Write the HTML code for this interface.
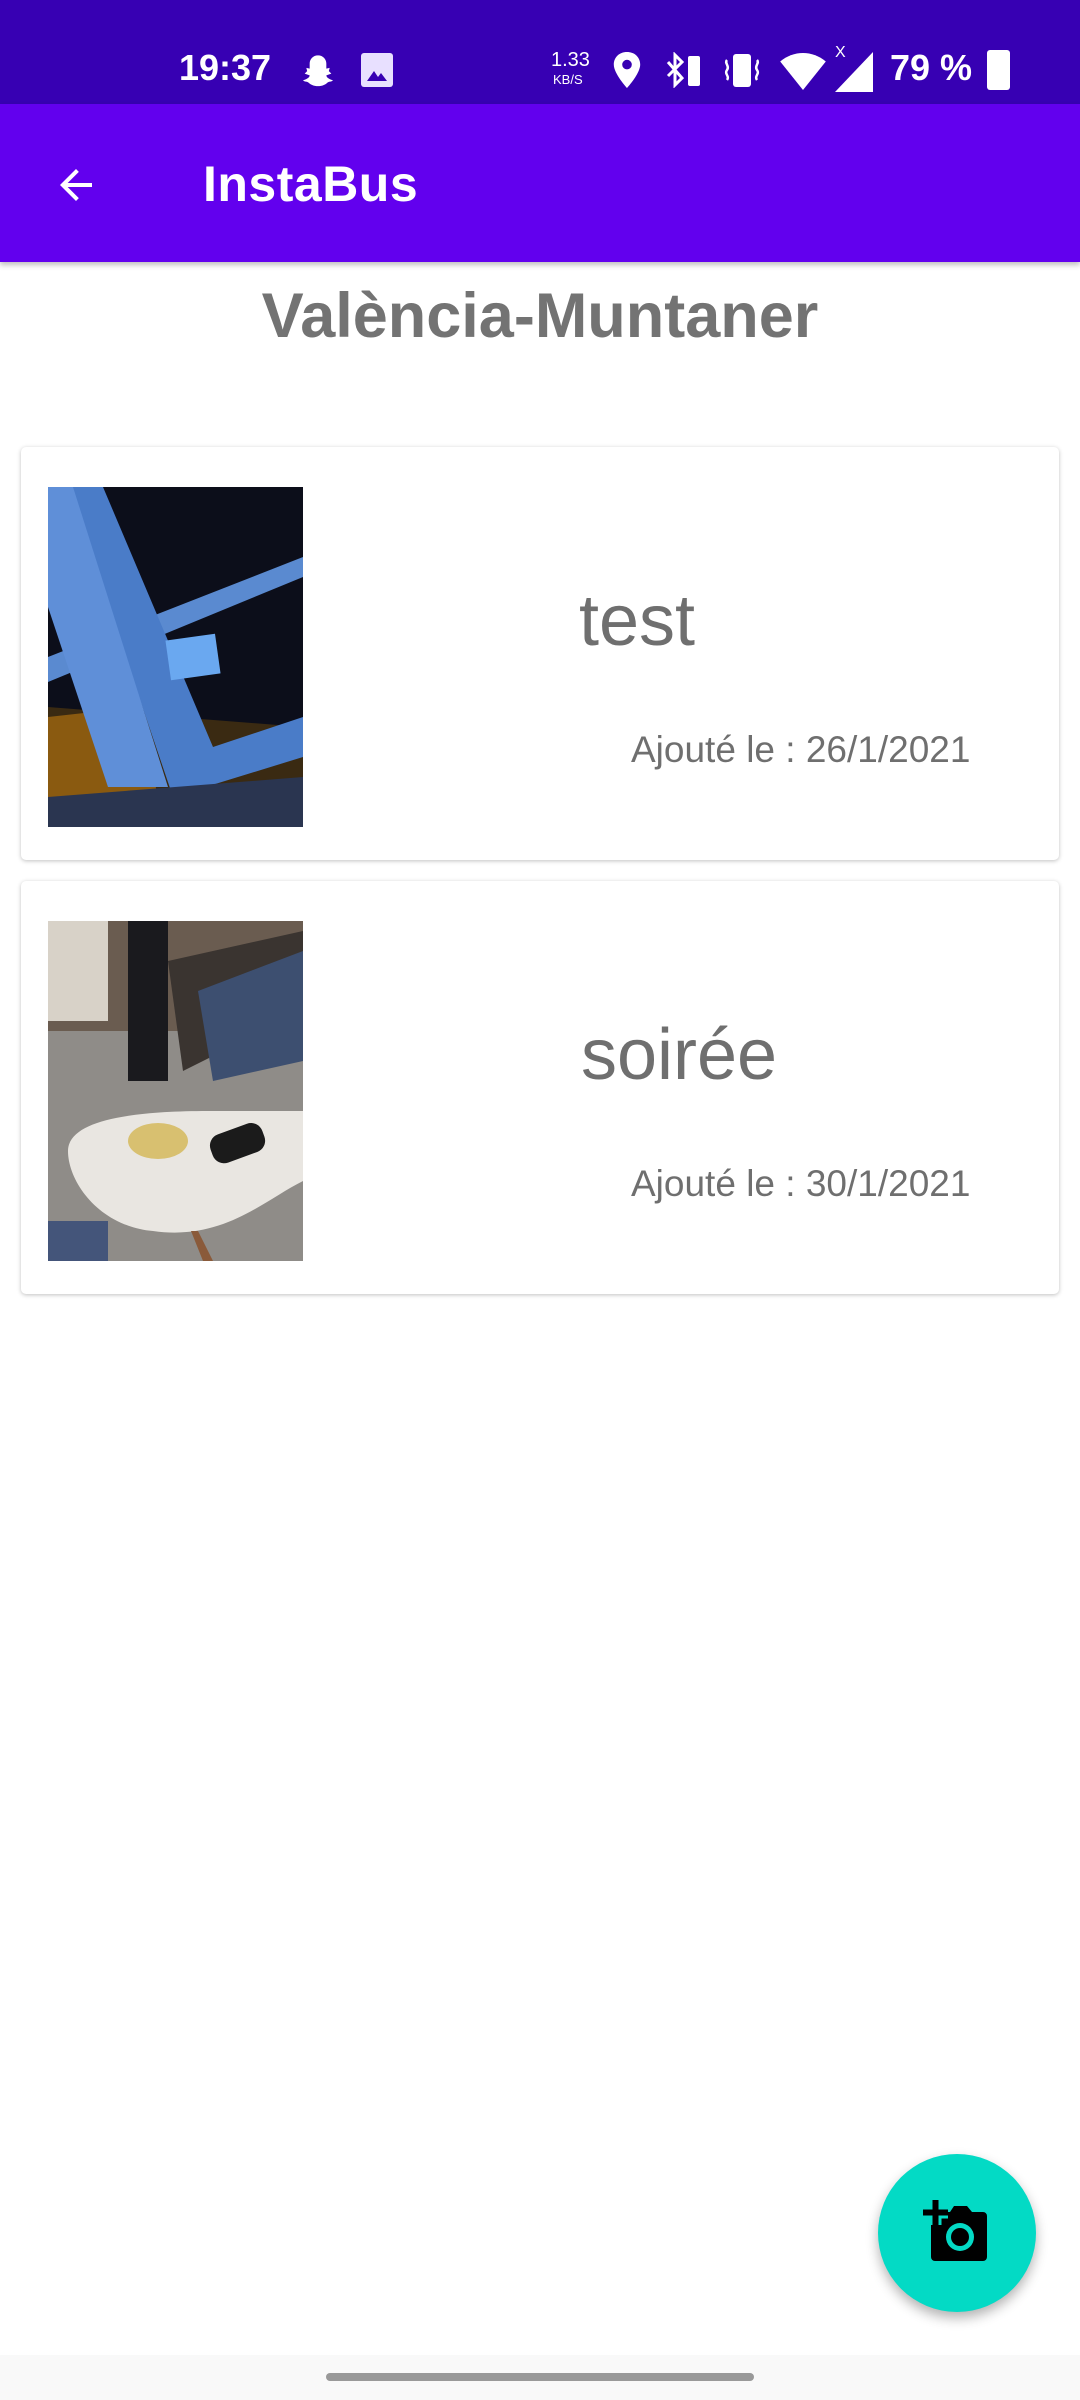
<!DOCTYPE html>
<html><head><meta charset="utf-8"><style>
*{margin:0;padding:0;box-sizing:border-box}
body{width:1080px;height:2400px;background:#fff;position:relative;overflow:hidden;font-family:"Liberation Sans",sans-serif}
.abs{position:absolute}
.sb{left:0;top:0;width:1080px;height:104px;background:#3700B3;color:#fff}
.ab{left:0;top:104px;width:1080px;height:158px;background:#6200EE;box-shadow:0 3px 5px rgba(0,0,0,.25)}
.card{left:21px;width:1038px;height:413px;background:#fff;border-radius:5px;box-shadow:0 1px 4px rgba(0,0,0,.25)}
.t{color:#6f6f6f}
</style></head><body>
<div class="abs sb">
  <div class="abs" style="left:179px;top:46px;font-size:36px;line-height:44px;font-weight:bold">19:37</div>
  <svg class="abs" style="left:298px;top:52px" width="40" height="40" viewBox="0 0 24 24"><path fill="#fff" d="M12 2c3 0 5 2.3 5 5v3l2-.5-.5 2 1.5 1.5-3 1c0 1.5 2.5 2.5 4 3-1 1-2.5.5-3.5 1.5-1 1-3 2-5.5 2s-4.5-1-5.5-2C5.5 17.5 4 18 3 17c1.5-.5 4-1.5 4-3l-3-1 1.5-1.5-.5-2 2 .5V7c0-2.7 2-5 5-5z"/></svg>
  <svg class="abs" style="left:361px;top:53px" width="32" height="34" viewBox="0 0 32 34"><rect width="32" height="34" rx="3" fill="#e8e0ff"/><path d="M6 28l7-10 4 6 3-4 6 8z" fill="#3700B3"/></svg>
  <div class="abs" style="left:551px;top:50px;font-size:20px;line-height:20px">1.33</div>
  <div class="abs" style="left:553px;top:72px;font-size:13px">KB/S</div>
  <svg class="abs" style="left:612px;top:52px" width="30" height="36" viewBox="0 0 24 30"><path fill="#fff" d="M12 0C5.5 0 1 4.5 1 10.5 1 18 12 30 12 30s11-12 11-19.5C23 4.5 18.5 0 12 0zm0 14.5a4 4 0 110-8 4 4 0 010 8z"/></svg>
  <svg class="abs" style="left:664px;top:52px" width="40" height="36" viewBox="0 0 40 36"><path d="M4 10l14 16-7 7V3l7 7L4 24" fill="none" stroke="#fff" stroke-width="3"/><rect x="24" y="4" width="12" height="30" rx="2" fill="#fff"/></svg>
  <svg class="abs" style="left:722px;top:52px" width="40" height="36" viewBox="0 0 40 36"><rect x="11" y="2" width="18" height="33" rx="3" fill="#fff"/><path d="M5 8c-3 3 3 6 0 10s3 6 0 10M35 8c3 3-3 6 0 10s-3 6 0 10" fill="none" stroke="#fff" stroke-width="2.5"/></svg>
  <svg class="abs" style="left:780px;top:52px" width="46" height="38" viewBox="0 0 24 20"><path fill="#fff" d="M12 20L0 5C7-1 17-1 24 5z"/></svg>
  <div class="abs" style="left:835px;top:44px;font-size:16px">X</div>
  <svg class="abs" style="left:835px;top:52px" width="38" height="40" viewBox="0 0 20 21"><path fill="#fff" d="M20 0v21H0z"/></svg>
  <div class="abs" style="left:890px;top:46px;font-size:36px;line-height:44px;font-weight:bold">79 %</div>
  <div class="abs" style="left:987px;top:50px;width:23px;height:40px;background:#fff;border-radius:3px"></div>
</div>
<div class="abs ab">
  <svg class="abs" style="left:52px;top:57px" width="48" height="48" viewBox="0 0 24 24"><path fill="#fff" d="M20 11H7.83l5.59-5.59L12 4l-8 8 8 8 1.41-1.41L7.83 13H20v-2z"/></svg>
  <div class="abs" style="left:203px;top:50px;font-size:50px;line-height:60px;color:#fff;font-weight:bold;letter-spacing:0.5px">InstaBus</div>
</div>
<div class="abs" style="left:0;width:1080px;top:278px;text-align:center;font-size:63px;font-weight:bold;line-height:76px;color:#737373">València-Muntaner</div>

<div class="abs card" style="top:447px">
  <svg class="abs" style="left:27px;top:40px" width="255" height="340" viewBox="0 0 255 340">
    <rect width="255" height="340" fill="#0c0e1a"/>
    <path d="M0 220L255 240V340H0z" fill="#3a2a12"/>
    <path d="M0 230l90 -10 20 90H0z" fill="#8a5a10"/>
    <path d="M0 170L255 70V90L0 195z" fill="#5a8ad0"/>
    <path d="M20 0h35l110 260 90-30v40l-130 40z" fill="#4a7cc8"/>
    <path d="M0 0h25l95 300H60L0 120z" fill="#5f8fd8"/>
    <rect x="120" y="150" width="50" height="40" fill="#6aa8f0" transform="rotate(-8 145 170)"/>
    <path d="M0 310L255 290V340H0z" fill="#2a3550"/>
  </svg>
  <div class="abs t" style="left:558px;top:134px;font-size:72px;line-height:80px">test</div>
  <div class="abs t" style="left:610px;top:281px;font-size:37px;line-height:44px">Ajouté le : 26/1/2021</div>
</div>
<div class="abs card" style="top:881px">
  <svg class="abs" style="left:27px;top:40px" width="255" height="340" viewBox="0 0 255 340">
    <rect width="255" height="340" fill="#8f8c88"/>
    <rect width="255" height="110" fill="#6a5c50"/>
    <rect x="0" y="0" width="60" height="100" fill="#d8d2c8"/>
    <rect x="80" y="0" width="40" height="160" fill="#1a1a1e"/>
    <path d="M120 40l135-30v80l-120 60z" fill="#3a3430"/>
    <path d="M150 70l105-40v110l-90 20z" fill="#3d4f70"/>
    <path d="M20 230c0-30 60-40 140-40h95v70c-40 20-80 60-150 50C50 305 20 260 20 230z" fill="#e9e6e1"/>
    <ellipse cx="110" cy="220" rx="30" ry="18" fill="#d8c070"/>
    <rect x="175" y="195" width="30" height="55" rx="12" fill="#1b1b1b" transform="rotate(70 190 222)"/>
    <path d="M150 310l15 30h-10l-12-30z" fill="#8a5a3a"/>
    <path d="M0 300h60v40H0z" fill="#44557a"/>
  </svg>
  <div class="abs t" style="left:560px;top:134px;font-size:72px;line-height:80px">soirée</div>
  <div class="abs t" style="left:610px;top:281px;font-size:37px;line-height:44px">Ajouté le : 30/1/2021</div>
</div>

<div class="abs" style="left:878px;top:2154px;width:158px;height:158px;border-radius:50%;background:#03DAC5;box-shadow:0 6px 12px rgba(0,0,0,.3)"></div>
<svg class="abs" style="left:918px;top:2196px" width="76" height="70" viewBox="0 0 76 70">
  <path fill="#000" d="M18 16h14l4-6h13l5 6h11a4 4 0 014 4v41a4 4 0 01-4 4H17a4 4 0 01-4-4V21z"/>
  <path d="M5 16.5h25M17.5 4v25" stroke="#03DAC5" stroke-width="12"/>
  <path d="M5 16.5h25M17.5 4v25" stroke="#000" stroke-width="6"/>
  <circle cx="42" cy="41" r="14" fill="#03DAC5"/><circle cx="42" cy="41" r="9" fill="#000"/>
</svg>
<div class="abs" style="left:0;top:2355px;width:1080px;height:45px;background:#f9f9f9"></div>
<div class="abs" style="left:326px;top:2373px;width:428px;height:8px;border-radius:4px;background:#999"></div>
</body></html>
